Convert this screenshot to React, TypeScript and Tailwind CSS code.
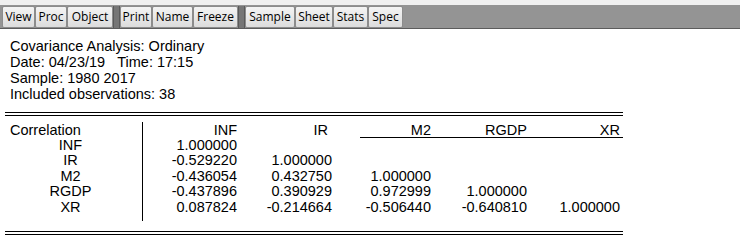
import React from 'react';

const groups = [
  [
    { label: 'View', w: 'w-[33px]' },
    { label: 'Proc', w: 'w-[32px]' },
    { label: 'Object', w: 'w-[46px]' },
  ],
  [
    { label: 'Print', w: 'w-[32px]' },
    { label: 'Name', w: 'w-[41px]' },
    { label: 'Freeze', w: 'w-[45px]' },
  ],
  [
    { label: 'Sample', w: 'w-[50px]' },
    { label: 'Sheet', w: 'w-[38px]' },
    { label: 'Stats', w: 'w-[35px]' },
    { label: 'Spec', w: 'w-[35px]' },
  ],
];

const header = [
  { h: 'INF', cls: 'w-[94px]' },
  { h: 'IR', cls: 'w-[95px] pr-[4px]' },
  { h: 'M2', cls: 'w-[99px]' },
  { h: 'RGDP', cls: 'w-[96px]' },
  { h: 'XR', cls: 'w-[93px]' },
];

const rows = [
  { name: 'INF', vals: ['1.000000', '', '', '', ''] },
  { name: 'IR', vals: ['-0.529220', '1.000000', '', '', ''] },
  { name: 'M2', vals: ['-0.436054', '0.432750', '1.000000', '', ''] },
  { name: 'RGDP', vals: ['-0.437896', '0.390929', '0.972999', '1.000000', ''] },
  { name: 'XR', vals: ['0.087824', '-0.214664', '-0.506440', '-0.640810', '1.000000'] },
];

const colW = ['w-[94px]', 'w-[95px]', 'w-[99px]', 'w-[96px]', 'w-[93px]'];

const ToolButton = ({ label, w }: { label: string; w: string }) => (
  <div
    className={`${w} h-[22px] flex items-center justify-center rounded-[2px] border border-[#8c8c8c] bg-gradient-to-b from-[#f4f4f4] to-[#dcdcdc] text-[12px] text-black`}
    style={{ fontFamily: '"Open Sans", "Noto Sans", sans-serif' }}
  >
    {label}
  </div>
);

export default function App() {
  return (
    <div className="w-[740px] h-[244px] bg-white overflow-hidden" style={{ fontFamily: '"Liberation Sans", Arial, sans-serif' }}>
      {/* toolbar */}
      <div className="h-[5px] bg-[#f0f0f0]" />
      <div className="h-[24px] bg-[#949494] border-b border-[#5c5c5c] flex items-start pl-[2px] pt-[1px]">
        {groups.map((g, gi) => (
          <React.Fragment key={gi}>
            {gi > 0 && <div className="w-[7px] h-[22px] bg-[#767676] border-x border-[#5a5a5a]" />}
            <div className="flex">
              {g.map((b) => (
                <ToolButton key={b.label} label={b.label} w={b.w} />
              ))}
            </div>
          </React.Fragment>
        ))}
      </div>

      {/* summary */}
      <div className="mt-[9px] pl-[10px] text-[14.5px] leading-[16px] text-black">
        <div>Covariance Analysis: Ordinary</div>
        <div>Date: 04/23/19&nbsp;&nbsp;&nbsp;Time: 17:15</div>
        <div>Sample: 1980 2017</div>
        <div>Included observations: 38</div>
      </div>

      {/* table */}
      <div className="ml-[5px] w-[618px] mt-[10px] text-[14.5px] text-black">
        <div className="border-t border-black" />
        <div className="border-t border-black mt-[2px]" />
        <div className="relative flex h-[22px]">
          <div className="w-[138px] mt-[6px] border-r border-black pl-[5px] leading-[16px]">Correlation</div>
          {header.map((c) => (
            <div key={c.h} className={`${c.cls} text-right pt-[6px] leading-[16px]`}>
              {c.h}
            </div>
          ))}
          {/* header underline, drawn only under the right-hand columns */}
          <div className="absolute left-[355px] right-0 bottom-0 border-b border-black" />
        </div>
        {rows.map((r) => (
          <div key={r.name} className="flex h-[15.4px] leading-[15.4px]">
            <div className="w-[138px] border-r border-black text-center pr-[6px]">{r.name}</div>
            {r.vals.map((v, i) => (
              <div key={i} className={`${colW[i]} text-right`}>
                {v}
              </div>
            ))}
          </div>
        ))}
        <div className="flex h-[6px]">
          <div className="w-[138px] border-r border-black" />
        </div>
        <div className="border-t border-black mt-[10px]" />
        <div className="border-t border-black mt-[2px]" />
      </div>
    </div>
  );
}
